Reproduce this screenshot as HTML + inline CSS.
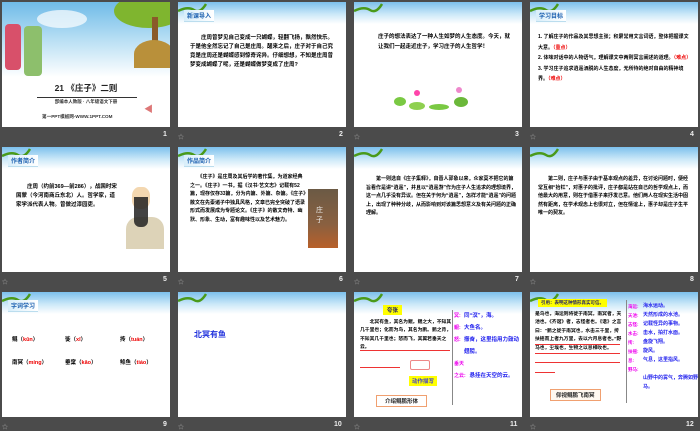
<!DOCTYPE html>
<html><head><meta charset="utf-8"><style>
*{margin:0;padding:0;box-sizing:border-box}
body{width:700px;height:431px;background:#4b4b4b;position:relative;overflow:hidden;font-family:"Liberation Sans","Noto Sans CJK SC",sans-serif}
.s{position:absolute;width:168px;height:125px;background:#fff;overflow:hidden}
.hd{position:absolute;left:0;top:0;width:168px;height:22px;background:linear-gradient(#7cc0ec,#cbe8f8 55%,#fff)}
.vine{position:absolute;left:0;top:0}
.lab{position:absolute;left:6px;top:8px;font-size:6px;font-weight:bold;color:#1a5fb0;background:linear-gradient(90deg,#d8eefa,#fff);padding:1px 3px;border-bottom:1px solid #bde}
.n{position:absolute;color:#eee;font-size:7px;font-weight:bold}
.ic{position:absolute;color:#aaa;font-size:6px}
.t{position:absolute;font-size:5.5px;line-height:9px;color:#000;font-weight:bold}
.r{color:#e00}
</style></head><body>

<!-- slide 1 -->
<div class="s" style="left:2px;top:2px">
 <div style="position:absolute;left:0;top:0;width:168px;height:75px;background:linear-gradient(#6fbbe8,#bfe2f5 55%,#fff)"></div>
 <div style="position:absolute;left:35px;top:8px;width:50px;height:18px;border-radius:50%;background:#fff;opacity:.7"></div>
 <div style="position:absolute;left:112px;top:-8px;width:70px;height:34px;border-radius:50%;background:#7fb52f"></div>
 <div style="position:absolute;left:150px;top:15px;width:6px;height:30px;background:#8a5a2a"></div>
 <div style="position:absolute;left:132px;top:38px;width:40px;height:28px;border-radius:50% 50% 0 0;background:#b9903a"></div>
 <div style="position:absolute;left:3px;top:22px;width:16px;height:46px;background:#d8506a;border-radius:4px"></div>
 <div style="position:absolute;left:22px;top:24px;width:18px;height:50px;background:#8dbf6c;border-radius:4px"></div>
 <div style="position:absolute;left:0;top:80px;width:168px;text-align:center;font-size:8.5px;font-weight:bold;color:#222">21 《庄子》二则</div>
 <div style="position:absolute;left:35px;top:95px;width:100px;height:1px;background:#333"></div>
 <div style="position:absolute;left:0;top:97px;width:168px;text-align:center;font-size:4.5px;font-weight:bold;color:#333">部编本人教版 · 八年级语文下册</div>
 <div style="position:absolute;left:40px;top:112px;font-size:4.6px;font-weight:bold;color:#333">第一PPT模板网-WWW.1PPT.COM</div>
 <div style="position:absolute;left:142px;top:100px;color:#d77;font-size:9px">◀</div>
</div>

<div class="s" style="left:178px;top:2px"><div class="hd"></div>
 <svg class="vine" width="30" height="12"><path d="M0 9 Q10 4 16 8 T28 2" stroke="#4a9a1a" stroke-width="2.5" fill="none"/></svg>
 <div class="lab">新课导入</div>
 <div class="t" style="left:12px;top:32px;width:148px">　　庄周曾梦见自己变成一只蝴蝶，轻翻飞扬，飘然快乐。于是他全然忘记了自己是庄周。醒来之后，庄子对于自己究竟是庄周还是蝴蝶感到惊奇诧异。仔细想想，不知是庄周曾梦变成蝴蝶了呢，还是蝴蝶做梦变成了庄周?</div>
</div>

<div class="s" style="left:354px;top:2px"><div class="hd"></div>
 <svg class="vine" width="30" height="12"><path d="M0 9 Q10 4 16 8 T28 2" stroke="#4a9a1a" stroke-width="2.5" fill="none"/></svg>
 <div class="t" style="left:24px;top:30px;width:135px;line-height:10px">庄子的想法表达了一种人生如梦的人生态度。今天，就让我们一起走近庄子，学习庄子的人生哲学！</div>
 <div style="position:absolute;left:40px;top:95px;width:12px;height:9px;border-radius:50%;background:#7ac943"></div>
 <div style="position:absolute;left:55px;top:100px;width:16px;height:8px;border-radius:50%;background:#8fd050"></div>
 <div style="position:absolute;left:75px;top:102px;width:20px;height:6px;border-radius:50%;background:#7ac943"></div>
 <div style="position:absolute;left:100px;top:95px;width:14px;height:10px;border-radius:50%;background:#6bb83a"></div>
 <div style="position:absolute;left:60px;top:88px;width:6px;height:6px;border-radius:50%;background:#f4a"></div>
 <div style="position:absolute;left:102px;top:85px;width:6px;height:6px;border-radius:50%;background:#e8c"></div>
</div>

<div class="s" style="left:530px;top:2px"><div class="hd"></div>
 <svg class="vine" width="30" height="12"><path d="M0 9 Q10 4 16 8 T28 2" stroke="#4a9a1a" stroke-width="2.5" fill="none"/></svg>
 <div class="lab">学习目标</div>
 <div class="t" style="left:8px;top:30px;width:155px;font-size:5px;line-height:10.5px">1. 了解庄子的作品及其思想主张；积累常用文言词语，整体把握课文大意。<span class="r">（重点）</span><br>2. 体味对话中的人物语气，理解课文中两则寓言阐述的道理。<span class="r">（难点）</span><br>3. 学习庄子追求逍遥洒脱的人生态度，无所待的绝对自由的精神境界。<span class="r">（难点）</span></div>
</div>

<div class="s" style="left:2px;top:147px"><div class="hd"></div>
 <svg class="vine" width="30" height="12"><path d="M0 9 Q10 4 16 8 T28 2" stroke="#4a9a1a" stroke-width="2.5" fill="none"/></svg>
 <div class="lab">作者简介</div>
 <div class="t" style="left:14px;top:36px;width:104px">　　庄周（约前369—前286），战国时宋国蒙（今河南商丘东北）人。哲学家，道家学派代表人物。曾做过漆园吏。</div>
 <div style="position:absolute;left:124px;top:70px;width:38px;height:32px;background:#ddd3b8;border-radius:12px 12px 0 0"></div>
 <div style="position:absolute;left:130px;top:40px;width:18px;height:22px;background:#f3d7b0;border-radius:40%"></div>
 <div style="position:absolute;left:132px;top:50px;width:14px;height:30px;background:#222;border-radius:0 0 6px 6px;opacity:.85"></div>
</div>

<div class="s" style="left:178px;top:147px"><div class="hd"></div>
 <svg class="vine" width="30" height="12"><path d="M0 9 Q10 4 16 8 T28 2" stroke="#4a9a1a" stroke-width="2.5" fill="none"/></svg>
 <div class="lab">作品简介</div>
 <div class="t" style="left:12px;top:26px;width:116px;font-size:5px;line-height:8.6px">　　《庄子》是庄周及其后学的著作集，为道家经典之一。《庄子》一书，据《汉书·艺文志》记载有52篇，现存仅存33篇，分为内篇、外篇、杂篇。《庄子》散文在先秦诸子中独具风格，文章已完全突破了语录形式而发展成为专题论文。《庄子》的散文奇特、幽默、形象、生动，富有趣味性以及艺术魅力。</div>
 <div style="position:absolute;left:130px;top:42px;width:30px;height:59px;background:linear-gradient(#6b5a45,#8a6040 60%,#b8602a)"></div>
 <div style="position:absolute;left:138px;top:58px;color:#eee;font-size:7px">庄<br>子</div>
</div>

<div class="s" style="left:354px;top:147px"><div class="hd"></div>
 <svg class="vine" width="30" height="12"><path d="M0 9 Q10 4 16 8 T28 2" stroke="#4a9a1a" stroke-width="2.5" fill="none"/></svg>
 <div class="t" style="left:12px;top:28px;width:150px;font-size:5px;line-height:8.6px">　　第一则选自《庄子集释》，自晋人郭象以来，众家莫不把它的篇旨看作是讲“逍遥”，并且以“逍遥游”作为庄子人生追求的理想境界，这一点几乎没有异议。但在关于何为“逍遥”，怎样才能“逍遥”的问题上，出现了种种分歧，从而影响到对该篇思想意义及有关问题的正确理解。</div>
</div>

<div class="s" style="left:530px;top:147px"><div class="hd"></div>
 <svg class="vine" width="30" height="12"><path d="M0 9 Q10 4 16 8 T28 2" stroke="#4a9a1a" stroke-width="2.5" fill="none"/></svg>
 <div class="t" style="left:8px;top:28px;width:154px;font-size:5px;line-height:8.6px">　　第二则，庄子与惠子由于基本观点的差异，在讨论问题时，便经常互相“抬杠”，对惠子的批评，庄子都是站在自己的哲学观点上，而他最大的用意，则在于借惠子来抒发己意。他们两人在现实生活中固然有距离，在学术观念上也很对立，但在情谊上，惠子却是庄子生平唯一的契友。</div>
</div>

<div class="s" style="left:2px;top:292px"><div class="hd"></div>
 <svg class="vine" width="30" height="12"><path d="M0 9 Q10 4 16 8 T28 2" stroke="#4a9a1a" stroke-width="2.5" fill="none"/></svg>
 <div class="lab">字词学习</div>
 <div class="t" style="left:10px;top:44px;font-size:5.5px">鲲（<span class="r">kūn</span>）</div>
 <div class="t" style="left:63px;top:44px;font-size:5.5px">徙（<span class="r">xǐ</span>）</div>
 <div class="t" style="left:118px;top:44px;font-size:5.5px">抟（<span class="r">tuán</span>）</div>
 <div class="t" style="left:10px;top:67px;font-size:5.5px">南冥（<span class="r">míng</span>）</div>
 <div class="t" style="left:63px;top:67px;font-size:5.5px">垂窠（<span class="r">kǎo</span>）</div>
 <div class="t" style="left:118px;top:67px;font-size:5.5px">鲦鱼（<span class="r">tiáo</span>）</div>
</div>

<div class="s" style="left:178px;top:292px"><div class="hd"></div>
 <svg class="vine" width="30" height="12"><path d="M0 9 Q10 4 16 8 T28 2" stroke="#4a9a1a" stroke-width="2.5" fill="none"/></svg>
 <div style="position:absolute;left:16px;top:37px;font-size:8px;font-weight:bold;color:#2233dd">北冥有鱼</div>
</div>

<div class="s" style="left:354px;top:292px"><div class="hd"></div>
 <svg class="vine" width="30" height="12"><path d="M0 9 Q10 4 16 8 T28 2" stroke="#4a9a1a" stroke-width="2.5" fill="none"/></svg>
 <div style="position:absolute;left:29px;top:13px;background:#ff0;font-size:5.5px;font-weight:bold;color:#226;padding:1px 4px">夸张</div>
 <div class="t" style="left:6px;top:27px;width:92px;font-size:4.8px;line-height:8.4px">　　北冥有鱼，其名为鲲。鲲之大，不知其几千里也；化而为鸟，其名为鹏。鹏之背，不知其几千里也；怒而飞，其翼若垂天之云。</div>
 <div style="position:absolute;left:6px;top:58px;width:90px;height:1px;background:#e33"></div>
 <div style="position:absolute;left:6px;top:75px;width:40px;height:1px;background:#e33"></div>
 <div style="position:absolute;left:56px;top:68px;width:20px;height:10px;border:1px solid #e88;border-radius:2px"></div>
 <div style="position:absolute;left:55px;top:84px;background:#ff0;font-size:5.5px;font-weight:bold;color:#44c;padding:1px 3px">动作描写</div>
 <div style="position:absolute;left:22px;top:103px;border:1px solid #f0a070;font-size:5.5px;font-weight:bold;color:#222;padding:1px 8px">介绍鲲鹏形体</div>
 <div style="position:absolute;left:98px;top:18px;width:1px;height:95px;background:#888"></div>
 <div style="position:absolute;left:100px;top:18px;font-size:5px;line-height:12px;color:#e0e;font-weight:bold">冥:<br>鲲:<br>怒:<br><br>垂天<br>之云:</div>
 <div style="position:absolute;left:110px;top:18px;width:58px;font-size:5.5px;line-height:12px;color:#22e;font-weight:bold">同“溟”，海。<br>大鱼名。<br>振奋，这里指用力鼓动翅膀。<br><br>　悬挂在天空的云。</div>
</div>

<div class="s" style="left:530px;top:292px"><div class="hd"></div>
 <svg class="vine" width="30" height="12"><path d="M0 9 Q10 4 16 8 T28 2" stroke="#4a9a1a" stroke-width="2.5" fill="none"/></svg>
 <div style="position:absolute;left:8px;top:7px;background:#ff0;font-size:4.5px;font-weight:bold;color:#226;padding:1px 3px">引用：表明这种情形真实可信。</div>
 <div class="t" style="left:5px;top:19px;width:88px;font-size:4.8px;line-height:8.4px">是鸟也，海运则将徙于南冥。南冥者，天池也。《齐谐》者，志怪者也。《谐》之言曰：“鹏之徙于南冥也，水击三千里，抟扶摇而上者九万里，去以六月息者也。”野马也，尘埃也，生物之以息相吹也。</div>
 <div style="position:absolute;left:5px;top:52px;width:85px;height:1px;background:#e33"></div>
 <div style="position:absolute;left:5px;top:61px;width:85px;height:1px;background:#e33"></div>
 <div style="position:absolute;left:5px;top:70px;width:85px;height:1px;background:#e33"></div>
 <div style="position:absolute;left:5px;top:80px;width:20px;height:1px;background:#e33"></div>
 <div style="position:absolute;left:20px;top:97px;border:1px solid #f0a070;font-size:5.5px;font-weight:bold;color:#222;padding:1px 5px;background:#fff8f0">仰视鲲鹏飞南冥</div>
 <div style="position:absolute;left:96px;top:8px;width:1px;height:103px;background:#888"></div>
 <div style="position:absolute;left:98px;top:10px;font-size:4.5px;line-height:9px;color:#e0e;font-weight:bold">海运:<br>天池:<br>志怪:<br>水击:<br>抟:<br>扶摇:<br>息:<br>野马:</div>
 <div style="position:absolute;left:113px;top:10px;width:55px;font-size:5px;line-height:9px;color:#22e;font-weight:bold">海水运动。<br>天然形成的水池。<br>记载怪异的事物。<br>击水，拍打水面。<br>盘旋飞翔。<br>旋风。<br>气息，这里指风。<br><br>山野中的雾气，奔腾如野马。</div>
</div>

<div class="n" style="left:163px;top:131px">1</div><div class="n" style="left:339px;top:131px">2</div><div class="n" style="left:515px;top:131px">3</div><div class="n" style="left:690px;top:131px">4</div>
<div class="n" style="left:163px;top:276px">5</div><div class="n" style="left:339px;top:276px">6</div><div class="n" style="left:515px;top:276px">7</div><div class="n" style="left:690px;top:276px">8</div>
<div class="n" style="left:163px;top:421px">9</div><div class="n" style="left:334px;top:421px">10</div><div class="n" style="left:510px;top:421px">11</div><div class="n" style="left:686px;top:421px">12</div>
<div class="ic" style="left:178px;top:132px">☆</div><div class="ic" style="left:354px;top:132px">☆</div><div class="ic" style="left:530px;top:132px">☆</div>
<div class="ic" style="left:2px;top:277px">☆</div><div class="ic" style="left:178px;top:277px">☆</div><div class="ic" style="left:354px;top:277px">☆</div><div class="ic" style="left:530px;top:277px">☆</div>
<div class="ic" style="left:2px;top:422px">☆</div><div class="ic" style="left:178px;top:422px">☆</div><div class="ic" style="left:354px;top:422px">☆</div><div class="ic" style="left:530px;top:422px">☆</div>
</body></html>
